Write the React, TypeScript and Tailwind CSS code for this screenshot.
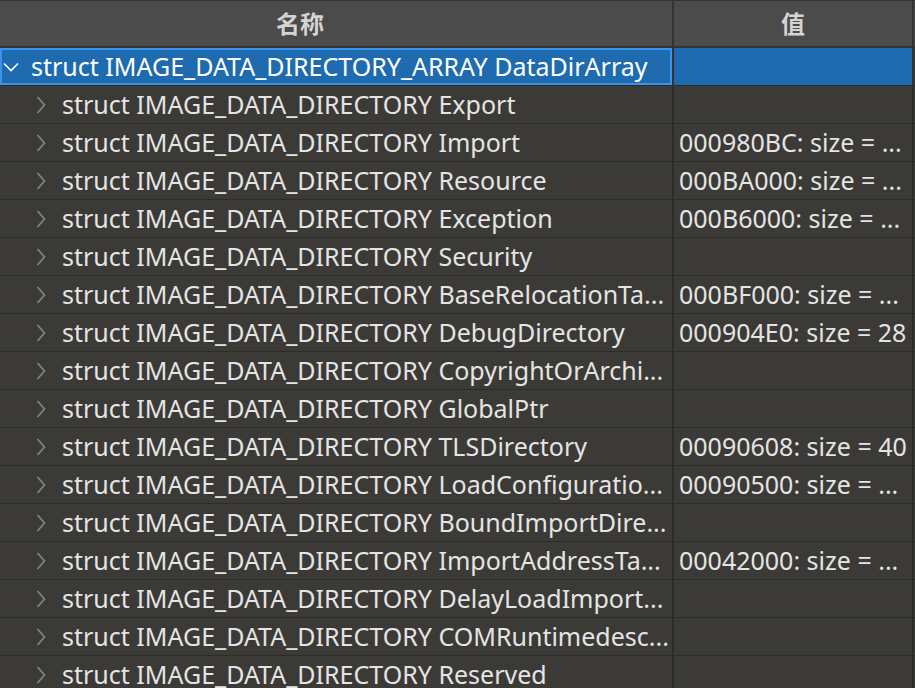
const rows: [string, string][] = [
  ["Export", ""],
  ["Import", "000980BC: size = ..."],
  ["Resource", "000BA000: size = ..."],
  ["Exception", "000B6000: size = ..."],
  ["Security", ""],
  ["BaseRelocationTa...", "000BF000: size = ..."],
  ["DebugDirectory", "000904E0: size = 28"],
  ["CopyrightOrArchi...", ""],
  ["GlobalPtr", ""],
  ["TLSDirectory", "00090608: size = 40"],
  ["LoadConfiguratio...", "00090500: size = ..."],
  ["BoundImportDire...", ""],
  ["ImportAddressTa...", "00042000: size = ..."],
  ["DelayLoadImport...", ""],
  ["COMRuntimedesc...", ""],
  ["Reserved", ""],
];

const font = { fontFamily: '"Noto Sans", "Noto Sans CJK SC", sans-serif' };

function Chevron({ down }: { down?: boolean }) {
  if (down) {
    return (
      <svg width="16" height="10" viewBox="0 0 16 10" className="shrink-0">
        <polyline points="1,1.5 8,8.5 15,1.5" fill="none" stroke="#ffffff" strokeWidth="1.6" />
      </svg>
    );
  }
  return (
    <svg width="10" height="18" viewBox="0 0 10 18" className="shrink-0">
      <polyline points="1.5,1 8.5,9 1.5,17" fill="none" stroke="#858585" strokeWidth="1.6" />
    </svg>
  );
}

export default function App() {
  return (
    <div className="w-[915px] h-[688px] overflow-hidden bg-[#3b3a36] text-[#e4e4e4]" style={font}>
      {/* Header */}
      <div className="flex h-[48px] bg-[#4b4b4b] border-t border-b-2 border-[#333333]">
        <div className="w-[672px] flex items-center justify-center pr-[72px] text-[24px] font-bold text-[#d4d4d4]">名称</div>
        <div className="w-[2px] bg-[#333333]" />
        <div className="w-[238px] flex items-center justify-center text-[24px] font-bold text-[#d4d4d4]">值</div>
        <div className="w-[2px] bg-[#333333]" />
      </div>

      {/* Selected root row */}
      <div className="flex h-[38px] border-b border-[#2c2c2a]">
        <div className="w-[672px] flex items-center bg-[#1f6bb0] border-2 border-[#3b92ea] pl-[1px]">
          <Chevron down />
          <span className="ml-[12px] text-[25px] leading-none text-white whitespace-nowrap">
            struct IMAGE_DATA_DIRECTORY_ARRAY DataDirArray
          </span>
        </div>
        <div className="w-[2px] bg-[#333333]" />
        <div className="w-[238px] bg-[#1f6bb0]" />
        <div className="w-[2px] bg-[#333333]" />
      </div>

      {rows.map(([name, value]) => (
        <div key={name} className="flex h-[38px] border-b border-[#2c2c2a]">
          <div className="w-[672px] flex items-center pl-[36px]">
            <Chevron />
            <span className="ml-[16px] text-[25px] leading-none whitespace-nowrap">
              struct IMAGE_DATA_DIRECTORY {name}
            </span>
          </div>
          <div className="w-[2px] bg-[#2c2c2a]" />
          <div className="w-[238px] flex items-center pl-[5px] text-[25px] leading-none whitespace-nowrap overflow-hidden">
            {value}
          </div>
          <div className="w-[2px] bg-[#2c2c2a]" />
        </div>
      ))}
    </div>
  );
}
